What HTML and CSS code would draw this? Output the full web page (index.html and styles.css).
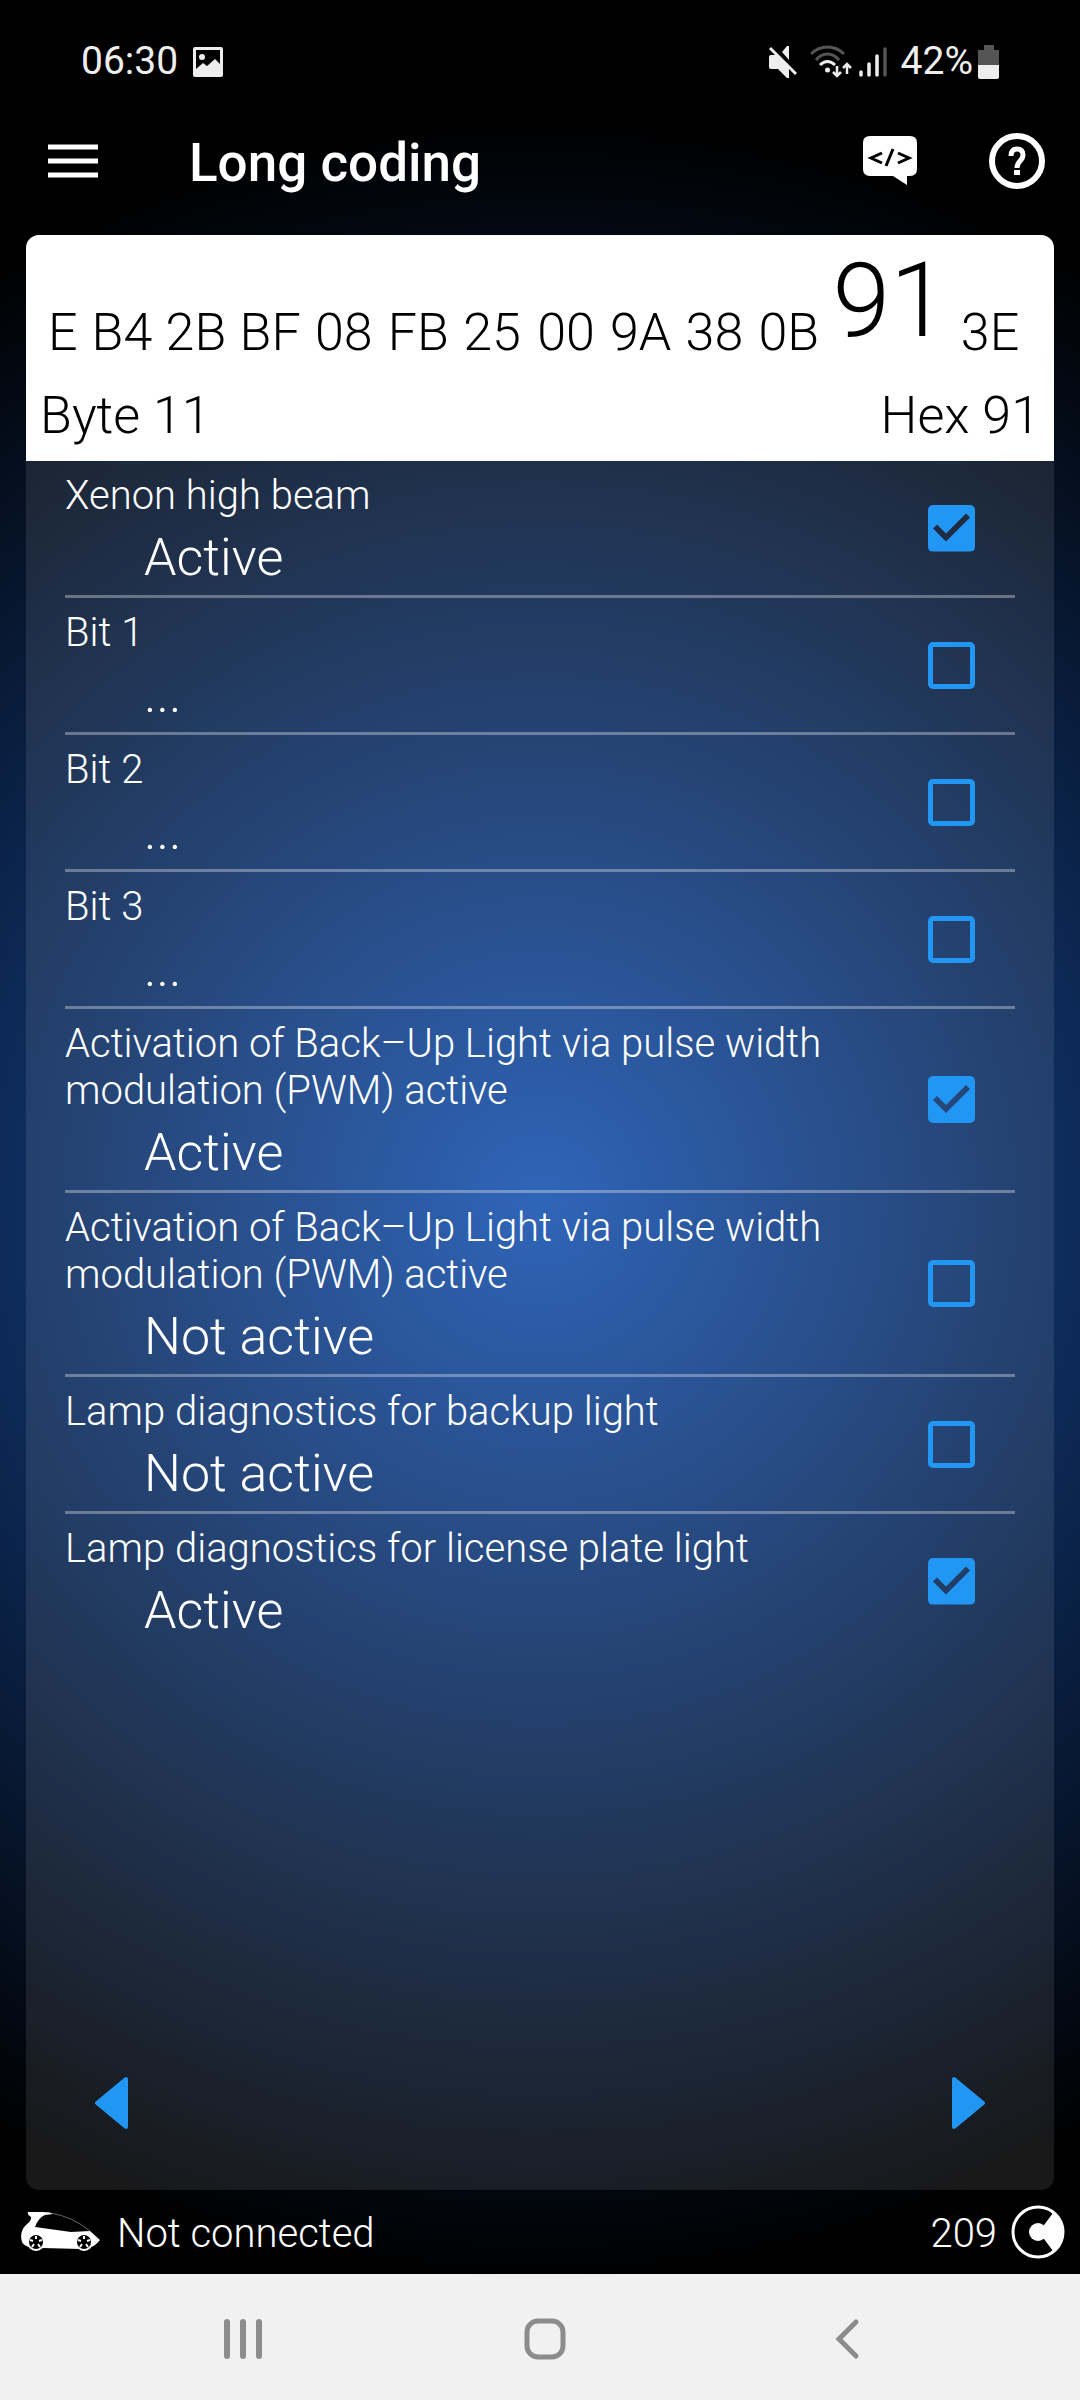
FILE: index.html
```html
<!DOCTYPE html>
<html lang="en">
<head>
  <meta charset="utf-8">
  <title>Long coding</title>
  <meta name="viewport" content="width=device-width, initial-scale=1.0">
  <link rel="stylesheet" href="styles.css">
</head>
<body>
  <div class="status-bar">
    <div class="status-group">
      <span class="clock">06:30</span>
      <svg class="status-picture" width="32" height="32" viewBox="0 0 32 32">
        <path fill="#eee" fill-rule="evenodd" d="M3 1H29Q31 1 31 3V29Q31 31 29 31H3Q1 31 1 29V3Q1 1 3 1ZM4 4V23L11 17L15 20L23 13L28 18V4Z"/>
        <circle cx="10" cy="11" r="3" fill="#eee"/>
      </svg>
    </div>
    <div class="status-group">
      <svg class="status-mute" width="30" height="32" viewBox="0 0 30 32">
        <path fill="#eee" d="M3 9H9L21 21V32H19L10 23H3Q1 23 1 21V11Q1 9 3 9ZM21 0V14L14 6L19 0Z"/>
        <path stroke="#000" stroke-width="2" d="M5 2L29 26"/>
        <path stroke="#eee" stroke-width="3" d="M2 2L28 28"/>
      </svg>
      <svg class="status-wifi" width="42" height="34" viewBox="0 0 42 34" fill="none" stroke-width="3">
        <path stroke="#555" d="M1 9Q8 2 17.500 2Q27 2 34 9M6 15Q11 9 17.500 9Q24 9 29 15"/>
        <path stroke="#eee" d="M10 20Q17.500 13 25 20"/>
        <circle cx="17.500" cy="25" r="2.500" fill="#eee"/>
        <path stroke="#eee" stroke-width="2.500" d="M27 21V31M23 27L27 31L31 27M37 29V19M33 23L37 19L41 23"/>
      </svg>
      <svg class="status-signal" width="28" height="32" viewBox="0 0 28 32" fill="none" stroke="#eee" stroke-width="3.500" stroke-linecap="round">
        <path d="M2 26V29M10 18V29M18 10V29"/>
        <path stroke="#555" d="M26 3V29"/>
      </svg>
      <span>42%</span>
      <svg class="status-battery" width="22" height="34" viewBox="0 0 22 34">
        <path fill="#555" d="M6 0H16V5H21V20H0V5H6Z"/>
        <path fill="#eee" d="M0 20H21V32Q21 34 19 34H2Q0 34 0 32Z"/>
      </svg>
    </div>
  </div>

  <header class="app-bar">
    <button aria-label="Menu">
      <svg width="50" height="34" viewBox="0 0 50 34">
        <path stroke="#fff" stroke-width="5" d="M0 3H50M0 17H50M0 31H50"/>
      </svg>
    </button>
    <h1>Long coding</h1>
    <button aria-label="Code">
      <svg width="56" height="56" viewBox="0 0 56 56">
        <path fill="#fff" d="M8 3H48Q55 3 55 10V36Q55 43 48 43H45V52L31 43H8Q1 43 1 36V10Q1 3 8 3Z"/>
        <path fill="none" stroke="#000" stroke-width="3" d="M20 20L9 25L20 30M36 20L47 25L36 30M31 16L24 33"/>
      </svg>
    </button>
    <button aria-label="Help">
      <svg width="56" height="56" viewBox="0 0 56 56" fill="none" stroke="#fff">
        <circle cx="28" cy="28" r="25" stroke-width="6"/>
        <path stroke-width="5" d="M22 23Q22 16 28 16Q34 16 34 22Q34 25 31 28Q28 31 28 35"/>
        <path stroke-width="6" d="M28 37V42"/>
      </svg>
    </button>
  </header>

  <main class="card">
    <section class="bytes">
      <div class="byte-strip">
        <span>E</span>
        <span>B4</span>
        <span>2B</span>
        <span>BF</span>
        <span>08</span>
        <span>FB</span>
        <span>25</span>
        <span>00</span>
        <span>9A</span>
        <span>38</span>
        <span>0B</span>
        <span class="selected">91</span>
        <span>3E</span>
      </div>
      <div class="byte-info">
        <span>Byte 11</span>
        <span>Hex 91</span>
      </div>
    </section>

    <div class="bits">
      <label class="bit">
        <span class="bit-text">
          <span class="bit-name">Xenon high beam</span>
          <span class="bit-value">Active</span>
        </span>
        <input type="checkbox" checked>
      </label>
      <label class="bit">
        <span class="bit-text">
          <span class="bit-name">Bit 1</span>
          <span class="bit-value">...</span>
        </span>
        <input type="checkbox">
      </label>
      <label class="bit">
        <span class="bit-text">
          <span class="bit-name">Bit 2</span>
          <span class="bit-value">...</span>
        </span>
        <input type="checkbox">
      </label>
      <label class="bit">
        <span class="bit-text">
          <span class="bit-name">Bit 3</span>
          <span class="bit-value">...</span>
        </span>
        <input type="checkbox">
      </label>
      <label class="bit">
        <span class="bit-text">
          <span class="bit-name">Activation of Back–Up Light via pulse width modulation (PWM) active</span>
          <span class="bit-value">Active</span>
        </span>
        <input type="checkbox" checked>
      </label>
      <label class="bit">
        <span class="bit-text">
          <span class="bit-name">Activation of Back–Up Light via pulse width modulation (PWM) active</span>
          <span class="bit-value">Not active</span>
        </span>
        <input type="checkbox">
      </label>
      <label class="bit">
        <span class="bit-text">
          <span class="bit-name">Lamp diagnostics for backup light</span>
          <span class="bit-value">Not active</span>
        </span>
        <input type="checkbox">
      </label>
      <label class="bit">
        <span class="bit-text">
          <span class="bit-name">Lamp diagnostics for license plate light</span>
          <span class="bit-value">Active</span>
        </span>
        <input type="checkbox" checked>
      </label>
    </div>

    <div class="pager">
      <button aria-label="Previous byte">
        <svg width="34" height="54" viewBox="0 0 34 54">
          <path fill="#2196f3" stroke="#2196f3" stroke-width="4" stroke-linejoin="round" d="M32 3V51L3 27Z"/>
        </svg>
      </button>
      <button aria-label="Next byte">
        <svg width="34" height="54" viewBox="0 0 34 54">
          <path fill="#2196f3" stroke="#2196f3" stroke-width="4" stroke-linejoin="round" d="M2 3V51L31 27Z"/>
        </svg>
      </button>
    </div>
  </main>

  <footer class="connection">
    <svg width="80" height="40" viewBox="0 0 80 40">
      <path fill="#fff" d="M7 0L22 0Q30 0 32 2L24 3Q18 5 14 15L50 20L69 19L79 28Q74 34 70 35L60 37L22 36L11 36Q3 34 1 30Q-2 20 5 13Q11 8 10 5Q6 3 7 0Z"/>
      <path fill="none" stroke="#666" d="M30 1Q52 5 69 19"/>
      <circle cx="15" cy="30" r="9" fill="#fff"/>
      <circle cx="63" cy="30" r="9" fill="#fff"/>
      <circle cx="15" cy="30" r="7" fill="#000"/>
      <circle cx="63" cy="30" r="7" fill="#000"/>
      <path stroke="#fff" stroke-width="2" d="M15 27V24M18 29L21 28M17 32L19 35M13 32L11 35M12 29L9 28M63 27V24M66 29L69 28M65 32L67 35M61 32L59 35M60 29L57 28"/>
    </svg>
    <span class="connection-text">Not connected</span>
    <span>209</span>
    <svg class="credits" width="54" height="54" viewBox="0 0 54 54">
      <circle cx="27" cy="27" r="25" fill="none" stroke="#fff" stroke-width="3"/>
      <circle cx="27" cy="27" r="9" fill="#fff"/>
      <path fill="#fff" d="M33 20L42 8Q53 15 53 27Q53 39 42 46L33 34Z"/>
    </svg>
  </footer>

  <nav class="system-nav">
    <button aria-label="Recents">
      <svg width="42" height="42" viewBox="0 0 42 42">
        <path stroke="#8c8c8c" stroke-width="6" stroke-linecap="round" d="M5 4V38M21 4V38M37 4V38"/>
      </svg>
    </button>
    <button aria-label="Home">
      <svg width="42" height="42" viewBox="0 0 42 42">
        <rect x="3" y="3" width="36" height="36" rx="11" fill="none" stroke="#8c8c8c" stroke-width="5"/>
      </svg>
    </button>
    <button aria-label="Back">
      <svg width="42" height="42" viewBox="0 0 42 42">
        <path fill="none" stroke="#8c8c8c" stroke-width="5" stroke-linecap="round" d="M30 4L13 21L30 38"/>
      </svg>
    </button>
  </nav>
</body>
</html>
```

FILE: styles.css
```css
* {
  box-sizing: border-box;
}
body {
  margin: 0;
  min-height: 100vh;
  display: flex;
  flex-direction: column;
  font-family: Roboto, sans-serif;
  font-weight: 300;
  font-size: 40px;
  line-height: 47px;
  color: white;
  background: radial-gradient(circle 100vw at 50% 50%, #1a55b2, #000) #000;
}
svg {
  display: block;
  flex: none;
}
button {
  border: 0;
  padding: 0;
  background: none;
  cursor: pointer;
}

/* Phone status bar */
.status-bar {
  display: flex;
  justify-content: space-between;
  padding: 38px 80px 0 81px;
  font-size: 39px;
  font-weight: 400;
  color: #eee;
}
.status-group {
  display: flex;
  align-items: center;
}
.status-picture {
  margin-left: 14px;
}
.status-mute {
  margin-right: 12px;
}
.status-wifi {
  margin-right: 7px;
}
.status-signal {
  margin-right: 14px;
}
.status-battery {
  margin-left: 5px;
}

/* App bar */
.app-bar {
  display: flex;
  align-items: center;
  gap: 71px;
  padding: 40px 35px 38px 48px;
}
.app-bar h1 {
  flex: 1;
  margin: 0;
  padding: 4px 0 0 20px;
  font-size: 53px;
  line-height: 68px;
  font-weight: 500;
}

.card {
  flex: 1;
  display: flex;
  flex-direction: column;
  margin: 0 26px;
  border-radius: 13px;
  overflow: hidden;
  background-color: rgba(255, 255, 255, 0.094);
}

/* Byte selector */
.bytes {
  padding: 4px 14px 15px;
  font-size: 52px;
  line-height: 61px;
  color: black;
  background-color: white;
}
.byte-strip {
  display: flex;
  justify-content: flex-end;
  align-items: flex-end;
  gap: 14px;
  padding: 0 20px 0 8px;
  overflow: hidden;
}
.byte-strip span + span {
  min-width: 60px;
  text-align: center;
}
.byte-strip .selected {
  font-size: 104px;
  line-height: 124px;
}
.byte-info {
  display: flex;
  justify-content: space-between;
  margin-top: 22px;
}

/* Bit list */
.bits {
  flex: 1;
  padding: 0 39px;
}
.bit {
  display: flex;
  align-items: center;
  padding: 11px 40px 7px 0;
}
.bit + .bit {
  border-top: 3px solid rgba(255, 255, 255, 0.33);
}
.bit-text {
  flex: 1;
  padding-right: 80px;
}
.bit-name {
  display: block;
}
.bit-value {
  display: block;
  margin-top: 8px;
  padding-left: 79px;
  font-size: 52px;
  line-height: 61px;
}
.bit input {
  appearance: none;
  flex: none;
  width: 47px;
  height: 47px;
  margin: 0 0 4px;
  border: 5px solid #2196f3;
  border-radius: 5px;
}
.bit input:checked {
  border: 0;
  background-color: #2196f3;
  clip-path: path(evenodd, "M0 0H47V47H0ZM5 24L9 20L18 29L38 9L42 13L18 37Z");
}

.pager {
  display: flex;
  justify-content: space-between;
  padding: 0 68px 60px;
}

/* Connection state */
.connection {
  display: flex;
  align-items: center;
  padding: 15px 15px 15px 21px;
}
.connection span {
  padding-top: 2px;
}
.connection .connection-text {
  flex: 1;
  padding-left: 16px;
}
.credits {
  margin-left: 14px;
}

.system-nav {
  display: flex;
  height: 126px;
  padding: 4px 82px 0 92px;
  background-color: #f1f1f1;
}
.system-nav button {
  flex: 1;
  display: flex;
  justify-content: center;
  align-items: center;
}
```
